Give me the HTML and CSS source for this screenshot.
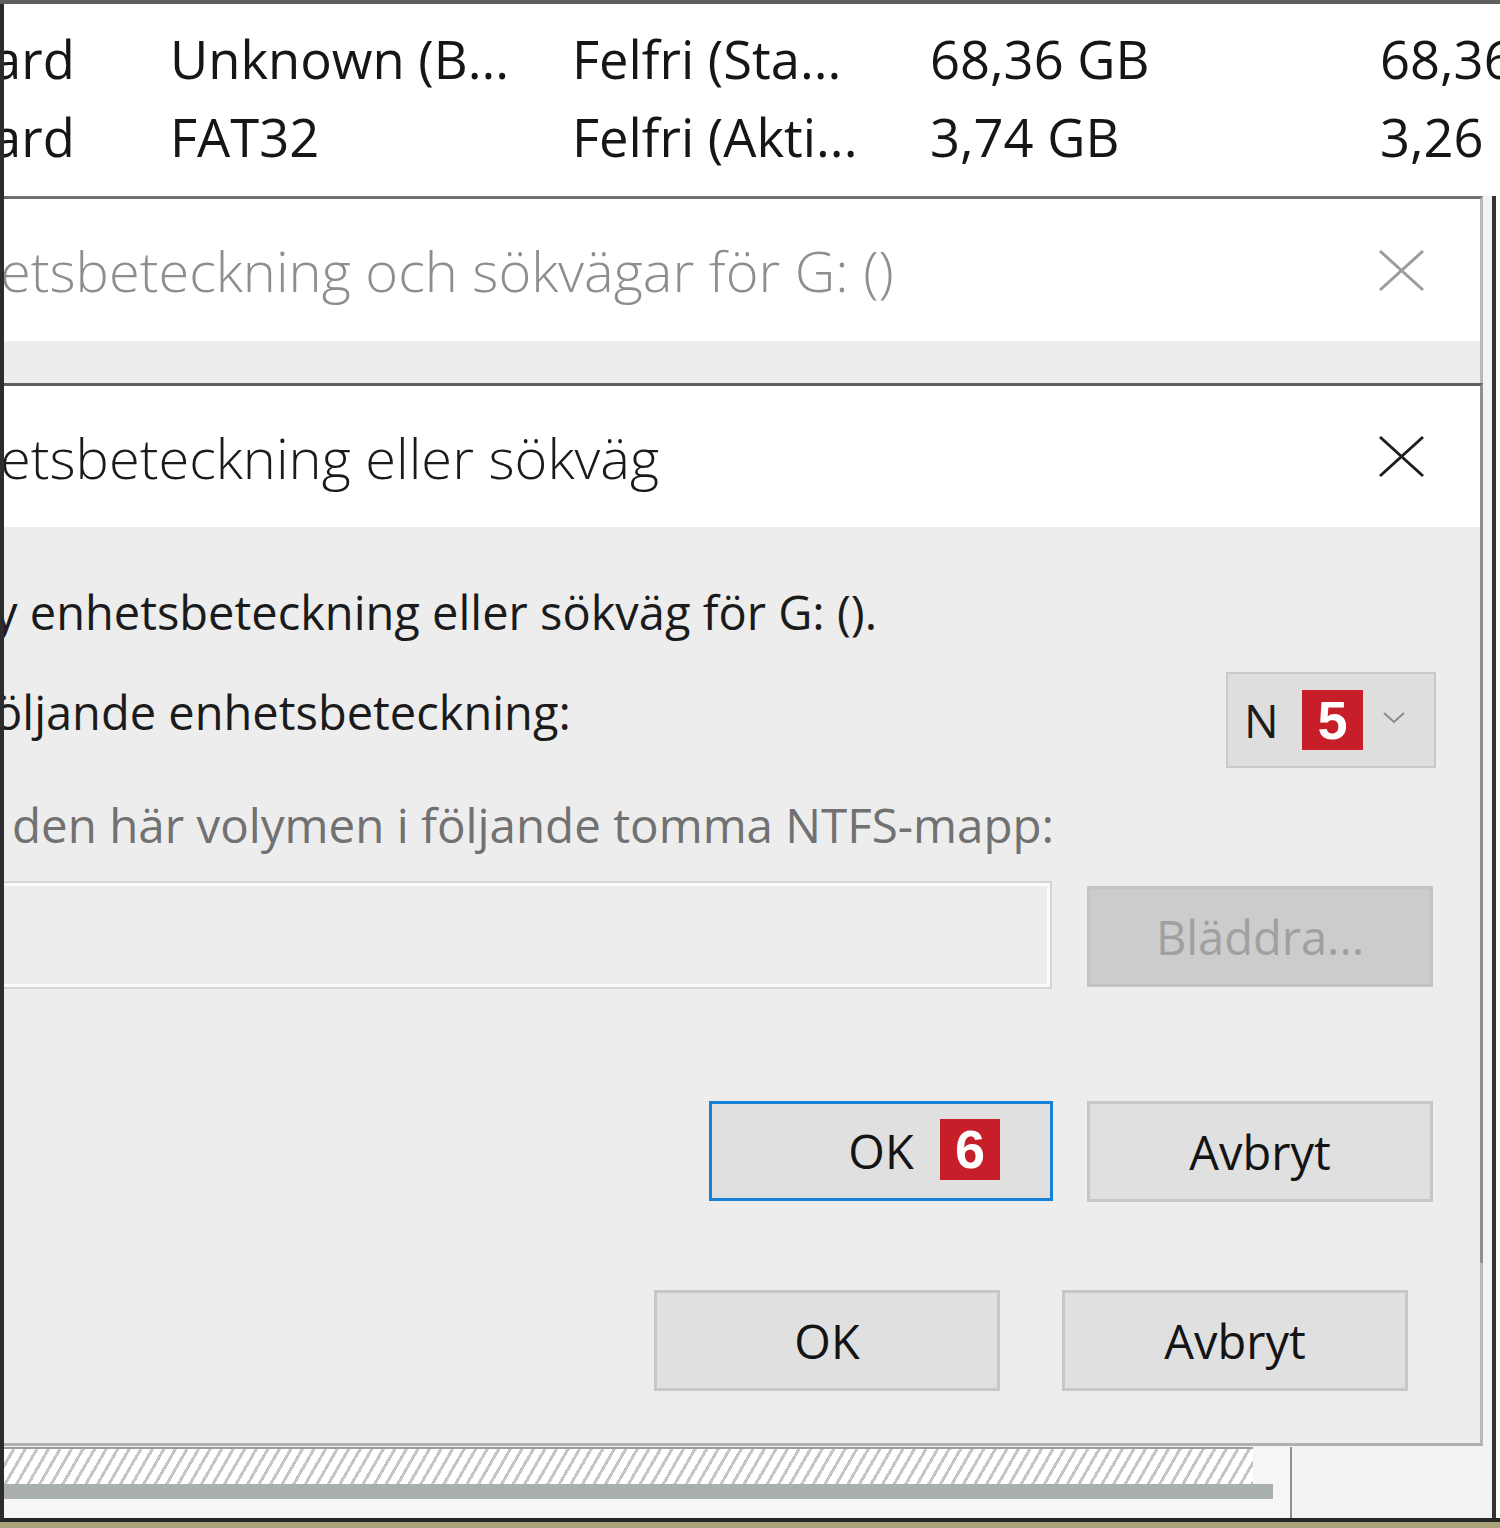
FILE: index.html
```html
<!DOCTYPE html>
<html lang="sv">
<head>
<meta charset="utf-8">
<title>Diskhantering</title>
<link rel="stylesheet" href="styles.css">
</head>
<body>
<div class="screen">
  <div class="topline"></div>
  <div class="main">
    <div class="rows">
      <div class="row">
        <span class="cell c1">ard</span>
        <span class="cell">Unknown (B...</span>
        <span class="cell">Felfri (Sta...</span>
        <span class="cell">68,36 GB</span>
        <span class="cell">68,36</span>
      </div>
      <div class="row">
        <span class="cell c1">ard</span>
        <span class="cell">FAT32</span>
        <span class="cell">Felfri (Akti...</span>
        <span class="cell">3,74 GB</span>
        <span class="cell">3,26</span>
      </div>
    </div>
    <div class="lower">
      <div class="disk">
        <div class="disk-graph">
          <div class="hatch"></div>
          <div class="bar"></div>
        </div>
      </div>
    </div>

    <section class="dialog dialog-back">
      <header class="titlebar">
        <span class="title inactive">etsbeteckning och sökvägar för G: ()</span>
        <svg class="close" width="47" height="43" viewBox="0 0 47 43"><path d="M2 2 L45 41 M45 2 L2 41" stroke="#9c9c9c" stroke-width="3" fill="none"/></svg>
      </header>
      <div class="body body-back">
        <div class="btnrow btnrow-back">
          <button class="btn">OK</button>
          <button class="btn">Avbryt</button>
        </div>
      </div>
    </section>

    <section class="dialog dialog-front">
      <header class="titlebar titlebar-front">
        <span class="title">etsbeteckning eller sökväg</span>
        <svg class="close" width="47" height="43" viewBox="0 0 47 43"><path d="M2 2 L45 41 M45 2 L2 41" stroke="#1e1e1e" stroke-width="3" fill="none"/></svg>
      </header>
      <div class="body body-front">
        <p class="line l1">y enhetsbeteckning eller sökväg för G: ().</p>
        <div class="l2row">
          <p class="line l2">öljande enhetsbeteckning:</p>
          <div class="dropdown">
            <span class="dd-value">N</span>
            <span class="badge">5</span>
            <svg class="chev" width="22" height="12" viewBox="0 0 22 12"><path d="M1 1 L11 10 L21 1" stroke="#8a8a8a" stroke-width="2" fill="none"/></svg>
          </div>
        </div>
        <p class="line l3">den här volymen i följande tomma NTFS-mapp:</p>
        <div class="inputrow">
          <div class="field"></div>
          <button class="btn btn-disabled">Bläddra...</button>
        </div>
        <div class="btnrow btnrow-front">
          <button class="btn btn-focus">OK<span class="badge badge-ok">6</span></button>
          <button class="btn">Avbryt</button>
        </div>
      </div>
    </section>
  </div>
  <div class="olive"></div>
</div>
</body>
</html>
```

FILE: styles.css
```css
* { box-sizing: border-box; }

html, body {
  margin: 0;
  padding: 0;
  background: #ffffff;
}

.screen {
  width: 1500px;
  height: 1528px;
  display: flex;
  flex-direction: column;
  overflow: hidden;
  background: #ffffff;
  font-family: "Open Sans", "Noto Sans", sans-serif;
  color: #151515;
}

.topline {
  height: 4px;
  flex: 0 0 4px;
  background: #5e5e5e;
}

.main {
  flex: 1;
  position: relative;
  overflow: hidden;
  display: flex;
  flex-direction: column;
  border-left: 4px solid #2c2c2c;
  border-bottom: 4px solid #262626;
  background: #ffffff;
}

.olive {
  height: 6px;
  flex: 0 0 6px;
  background: #aba37a;
}

/* table rows behind the dialogs */
.rows {
  flex: 0 0 192px;
  padding-top: 16px;
  background: #ffffff;
}

.row {
  display: grid;
  grid-template-columns: 166px 402px 358px 450px 1fr;
  height: 78px;
  line-height: 78px;
  font-size: 52.5px;
  white-space: nowrap;
  color: #161616;
}

.c1 { margin-left: -12px; }

.lower {
  flex: 1;
  display: flex;
  flex-direction: column;
  justify-content: flex-end;
  background: #f3f3f3;
  border-right: 4px solid #333333;
  margin-right: 4px;
}

.disk {
  height: 71px;
  display: flex;
}

.disk-graph {
  width: 1288px;
  border-right: 2px solid #8f8f8f;
  display: flex;
  flex-direction: column;
  background: #f6f6f6;
}

.hatch {
  width: 1249px;
  height: 37px;
  border-top: 2px solid #9d9d9d;
  background: repeating-linear-gradient(120deg, #ffffff 0 7px, #c6c6c6 7px 10px);
}

.bar {
  width: 1269px;
  height: 15px;
  background: #a9afae;
}

/* dialogs */
.dialog {
  position: absolute;
  left: -20px;
  right: 17px;
  display: flex;
  flex-direction: column;
  background: #ededed;
}

.dialog-back {
  top: 192px;
  bottom: 72px;
  border-top: 3px solid #707070;
  border-right: 3px solid #b8b8b8;
  border-bottom: 3px solid #b0b0b0;
}

.dialog-front {
  top: 379px;
  bottom: 255px;
  border-top: 3px solid #5f5f5f;
  border-right: 3px solid #8f8f8f;
}

.titlebar {
  height: 142px;
  flex: 0 0 142px;
  background: #ffffff;
  display: flex;
  align-items: center;
  justify-content: space-between;
  padding-left: 16px;
  padding-right: 55px;
}

.titlebar-front {
  height: 141px;
  flex: 0 0 141px;
}

.title {
  font-size: 56px;
  font-weight: 300;
  color: #1a1a1a;
  white-space: nowrap;
}

.title.inactive { color: #8e8e8e; }

.close { display: block; }

.body {
  flex: 1;
  display: flex;
  flex-direction: column;
}

.body-back {
  justify-content: flex-end;
  padding: 0 72px 52px 0;
}

.body-front {
  padding: 0 47px 0 10px;
}

.line {
  margin: 0;
  font-size: 47px;
  line-height: 64px;
  white-space: nowrap;
  color: #1b1b1b;
}

.l1 { margin-top: 53px; }

.l2row {
  margin-top: 28px;
  height: 96px;
  display: flex;
  justify-content: space-between;
  align-items: flex-start;
}

.l2 { margin-top: 8px; }

.dropdown {
  width: 210px;
  height: 96px;
  margin-right: -3px;
  background: #dedede;
  border: 2px solid #c9c9c9;
  display: flex;
  align-items: center;
  padding-left: 16px;
}

.dd-value {
  font-size: 46px;
  color: #1c1c1c;
  width: 58px;
}

.chev { margin-left: 20px; margin-top: -4px; }

.badge {
  width: 61px;
  height: 60px;
  background: #c81e2a;
  color: #ffffff;
  font-family: "Liberation Sans", Arial, sans-serif;
  font-weight: 700;
  font-size: 54px;
  line-height: 60px;
  text-align: center;
}

.l3 {
  margin-top: 25px;
  margin-left: 18px;
  font-size: 47.5px;
  color: #717171;
}

.inputrow {
  margin-top: 26px;
  height: 104px;
  display: flex;
  align-items: flex-start;
  gap: 37px;
}

.field {
  flex: 1;
  height: 104px;
  margin-left: -20px;
  background: #ececec;
  border: 3px solid #fafafa;
  box-shadow: 0 0 0 2px #d4d4d4;
}

.btn {
  width: 346px;
  height: 101px;
  background: #e0e0e0;
  border: 3px solid #c7c7c7;
  font-family: "Open Sans", "Noto Sans", sans-serif;
  font-size: 47px;
  color: #141414;
  padding: 0;
  position: relative;
}

.btn-disabled {
  margin-top: 3px;
  background: #cccccc;
  border-color: #c4c4c4;
  color: #a0a0a0;
}

.btnrow {
  display: flex;
  justify-content: flex-end;
}

.btnrow-back { gap: 62px; }

.btnrow-front {
  margin-top: 114px;
  gap: 34px;
}

.btn-focus {
  width: 344px;
  height: 100px;
  border: 3px solid #1681d6;
}

.badge-ok {
  position: absolute;
  left: 228px;
  top: 15px;
  width: 60px;
  height: 61px;
  line-height: 61px;
}
```
